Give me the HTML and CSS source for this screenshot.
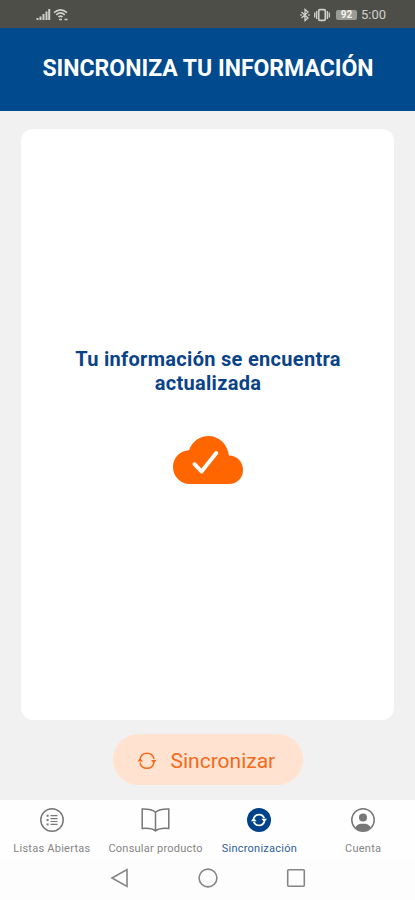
FILE: index.html
```html
<!DOCTYPE html>
<html lang="es">
<head>
    <meta charset="UTF-8">
    <meta name="viewport" content="width=device-width, initial-scale=1.0">
    <title>Sincronización</title>
    <link rel="stylesheet" href="styles.css">
</head>
<body>
    <div class="status-bar">
        <svg class="signal" width="32" height="14" viewBox="0 0 32 14">
            <path d="M1.5 12V10M4.5 12V8.5M7.5 12V6M10.5 12V3.5M13.2 12V1" stroke-width="2"/>
            <path d="M18 4.6Q24.5-1 31 4.6M20.2 6.8Q24.5 3 28.8 6.8M22.5 9Q24.5 7.3 26.5 9" stroke-width="1.7"/>
            <path d="M23 11.5h3M28.5 11.5h3" stroke-width="1.6"/>
        </svg>
        <div class="status-right">
            <svg width="10" height="14" viewBox="0 0 10 14">
                <path d="M1.5 4l6.5 6L5 12.5v-11L8 4l-6.5 6M.3 7h1.5M8.2 7h1.5" stroke-width="1.3"/>
            </svg>
            <svg width="16" height="14" viewBox="0 0 16 14">
                <rect x="4.7" y="1.6" width="6.6" height="10.8" rx="1.2" stroke-width="1.7"/>
                <path d="M2.6 3v8M13.4 3v8M.7 4.5v5M15.3 4.5v5" stroke-width="1.3"/>
            </svg>
            <span class="battery">92</span>
            <span class="clock">5:00</span>
        </div>
    </div>

    <header class="header">
        <h1>SINCRONIZA TU INFORMACIÓN</h1>
    </header>

    <main class="content">
        <section class="card">
            <p>Tu información se encuentra<br>actualizada</p>
            <svg class="cloud" width="70" height="48" viewBox="0 0 70 48">
                <path d="M17 48C7.5 48 0 40.5 0 31S7 14.5 16 14.2C19.3 5.5 26.5 0 35.500 0 46 0 54.5 8 56 19.6 64 19.5 70 26 70 34S64 48 56 48Z" fill="#ff6600"/>
                <path d="M21.5 28.2l7 7.3L43.3 17" fill="none" stroke="#fff" stroke-width="3.9" stroke-linecap="round" stroke-linejoin="round"/>
            </svg>
        </section>

        <button class="sync-button">
            <svg width="20" height="18" viewBox="0 0 20 18">
                <path d="M3 7A7.2 7.6 0 0 1 17 7M17 10.5A7.2 7.6 0 0 1 3 10.5" fill="none" stroke="#f26a1b" stroke-width="1.4"/>
                <path d="M.5 9.5l2.6-3.6L6 9.5zM14 8h5.5l-2.7 3.6z" fill="#f26a1b"/>
            </svg>
            <span>Sincronizar</span>
        </button>
    </main>

    <nav class="tabs">
        <a class="tab">
            <svg width="24" height="24" viewBox="0 0 24 24">
                <circle cx="12" cy="12" r="11.2"/>
                <path d="M10.5 7.7h7M10.5 10.6h7M10.5 13.5h7M10.5 16.4h7" stroke-width="1.2"/>
                <path d="M6.6 7.7h2M6.6 12h2M6.6 16.4h2" stroke-width="1.9"/>
            </svg>
            <span>Listas Abiertas</span>
        </a>
        <a class="tab">
            <svg width="30" height="24" viewBox="0 0 30 24">
                <path d="M14.5 4.2C11 1 6 .9 1.2 1V20.5C6 20.1 11 20 14.5 23 18 20 23 20.1 27.8 20.5V1C23 .9 18 1 14.5 4.2ZM14.5 4.2V23"/>
            </svg>
            <span>Consular producto</span>
        </a>
        <a class="tab active">
            <svg width="24" height="24" viewBox="0 0 24 24">
                <circle cx="12" cy="12" r="12" fill="#00428a" stroke="none"/>
                <path d="M6.8 10.3A5.5 5.5 0 0 1 17.2 10.3M17.2 13.7A5.5 5.5 0 0 1 6.8 13.7" stroke="#fff" stroke-width="1.9"/>
                <path d="M4 13.2l2.6-3.7 3 3.7zM14.4 10.8h5.6l-2.6 3.7z" fill="#fff" stroke="none"/>
            </svg>
            <span>Sincronización</span>
        </a>
        <a class="tab">
            <svg width="24" height="24" viewBox="0 0 24 24">
                <circle cx="12" cy="12" r="11.2"/>
                <circle cx="12" cy="9.5" r="4" fill="#777" stroke="none"/>
                <path d="M4.2 19.5C6.5 16 9 15.8 12 15.8S17.5 16 19.8 19.5Q16.5 23 12 23T4.2 19.5Z" fill="#777" stroke="none"/>
            </svg>
            <span>Cuenta</span>
        </a>
    </nav>

    <div class="android-nav">
        <svg width="20" height="20" viewBox="0 0 20 20"><path d="M2 10L17 1.5V18.5Z"/></svg>
        <svg width="20" height="20" viewBox="0 0 20 20"><circle cx="10" cy="10" r="8.9"/></svg>
        <svg width="20" height="20" viewBox="0 0 20 20"><rect x="1.7" y="1.7" width="16.6" height="16.6" rx="1"/></svg>
    </div>
</body>
</html>
```
FILE: styles.css
```css
* {
    box-sizing: border-box;
}
body {
    display: flex;
    flex-direction: column;
    height: 100vh;
    margin: 0;
    overflow: hidden;
    background: #f1f1f1;
    font-family: Roboto, sans-serif;
}
svg {
    display: block;
    flex: none;
}
.status-bar {
    display: flex;
    align-items: center;
    justify-content: space-between;
    height: 28px;
    padding: 1px 29px 0 36px;
    background: #4e4e48;
    color: #d0d0cb;
}
.status-bar svg {
    fill: none;
    stroke: #d0d0cb;
}
.status-right {
    display: flex;
    align-items: center;
    gap: 4px;
}
.battery {
    width: 21px;
    height: 10px;
    margin-left: 2px;
    border-radius: 2px;
    background: #9b9a94;
    color: #f3f3ef;
    font-size: 10px;
    font-weight: 700;
    line-height: 10px;
    text-align: center;
}
.clock {
    font-size: 13px;
    line-height: 14px;
}
.header {
    display: flex;
    align-items: center;
    justify-content: center;
    height: 83px;
    padding: 0 0 2px 1px;
    background: #004a8d;
    color: #fff;
}
.header h1 {
    margin: 0;
    font-size: 23px;
    font-weight: 700;
    line-height: 28px;
    white-space: nowrap;
}
.content {
    display: flex;
    flex-direction: column;
    align-items: center;
    height: 689px;
    padding: 18px 21px 0;
}
.card {
    display: flex;
    flex-direction: column;
    align-items: center;
    width: 373px;
    height: 591px;
    padding-top: 218px;
    border-radius: 12px;
    background: #fff;
}
.card p {
    margin: 0;
    padding-left: 1px;
    color: #0b4388;
    font-size: 20px;
    font-weight: 700;
    letter-spacing: 0.3px;
    line-height: 24px;
    text-align: center;
    white-space: nowrap;
}
.cloud {
    margin-top: 41px;
}
.sync-button {
    display: flex;
    align-items: center;
    gap: 14px;
    width: 190px;
    height: 51px;
    margin-top: 14px;
    padding: 2px 0 0 24px;
    border: 0;
    border-radius: 26px;
    background: #ffe2cf;
    color: #f26a1b;
    font: 21px/26px Roboto, sans-serif;
}
.tabs {
    display: flex;
    height: 60px;
    padding-top: 8px;
    background: #fefefe;
}
.tab {
    display: flex;
    flex-direction: column;
    align-items: center;
    gap: 10px;
    width: 103.75px;
    color: #858585;
    font-size: 11px;
    letter-spacing: 0.25px;
    line-height: 14px;
    white-space: nowrap;
}
.tab svg {
    fill: none;
    stroke: #777;
    stroke-width: 1.5;
}
.active {
    color: #2d5f9b;
}
.android-nav {
    display: flex;
    align-items: center;
    justify-content: center;
    gap: 68px;
    height: 40px;
    padding-bottom: 4px;
    background: #fdfdfd;
}
.android-nav svg {
    fill: none;
    stroke: #858585;
    stroke-width: 1.6;
}
```
